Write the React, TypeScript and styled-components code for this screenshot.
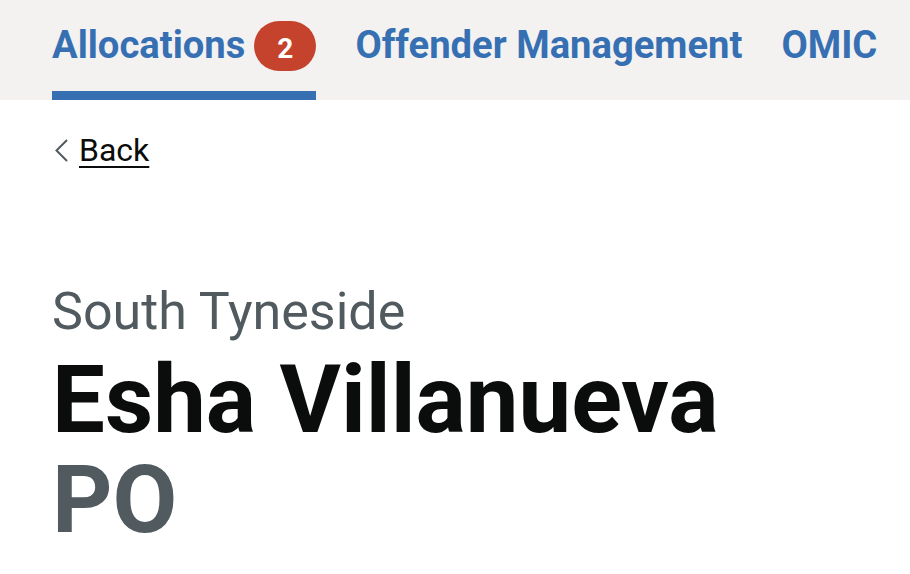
import React from "react";
import styled, { createGlobalStyle } from "styled-components";

const GlobalStyle = createGlobalStyle`
  html, body {
    margin: 0;
    padding: 0;
    background: #ffffff;
  }
  body {
    font-family: Roboto, "Liberation Sans", Arial, sans-serif;
    color: #0b0c0c;
    -webkit-font-smoothing: antialiased;
  }
`;

const ServiceNav = styled.nav`
  background: #f3f2f1;
  height: 100px;
`;

const NavList = styled.ul`
  list-style: none;
  margin: 0;
  padding: 0 0 0 52px;
  display: flex;
  gap: 39px;
  height: 100%;
`;

const NavItem = styled.li<{ $active?: boolean }>`
  box-sizing: border-box;
  height: 100%;
  padding-top: 21px;
  border-bottom: 9px solid ${(p) => (p.$active ? "#3670b3" : "transparent")};
  display: flex;
  align-items: flex-start;
  gap: 9px;
`;

const NavLink = styled.a`
  font-size: 38.2px;
  font-weight: 700;
  line-height: 48px;
  color: #3670b3;
  text-decoration: none;
  white-space: nowrap;
`;

const CountBadge = styled.span`
  box-sizing: border-box;
  width: 62px;
  height: 50px;
  border-radius: 25px;
  background: #c5432c;
  color: #ffffff;
  font-size: 28px;
  font-weight: 700;
  display: flex;
  align-items: center;
  justify-content: center;
  padding-top: 5px;
  line-height: 1;
`;

const Main = styled.main`
  padding: 30px 0 0 52px;
`;

const BackLink = styled.a`
  display: inline-flex;
  align-items: center;
  gap: 11px;
  font-size: 32px;
  line-height: 40px;
  color: #0b0c0c;
  text-decoration: none;
  padding-left: 3px;
`;

const BackText = styled.span`
  text-decoration: underline;
  text-decoration-thickness: 2px;
  text-underline-offset: 5px;
`;

const Chevron = styled.svg`
  width: 13px;
  height: 23px;
  flex: none;
`;

const Caption = styled.span`
  display: block;
  margin-top: 117px;
  font-size: 52px;
  line-height: 50px;
  font-weight: 400;
  color: #505a5f;
`;

const Heading = styled.h1`
  margin: 13px 0 0;
  font-size: 94px;
  line-height: 100px;
  font-weight: 700;
  color: #0b0c0c;
`;

const Role = styled.span`
  display: block;
  color: #505a5f;
`;

export default function App() {
  return (
    <>
      <GlobalStyle />
      <ServiceNav aria-label="Menu">
        <NavList>
          <NavItem $active>
            <NavLink href="#">Allocations</NavLink>
            <CountBadge>2</CountBadge>
          </NavItem>
          <NavItem>
            <NavLink href="#">Offender Management</NavLink>
          </NavItem>
          <NavItem>
            <NavLink href="#">OMIC</NavLink>
          </NavItem>
        </NavList>
      </ServiceNav>
      <Main>
        <BackLink href="#">
          <Chevron viewBox="0 0 13 23" aria-hidden="true">
            <polyline
              points="12,1 1.5,11.5 12,22"
              fill="none"
              stroke="#505a5f"
              strokeWidth="2"
            />
          </Chevron>
          <BackText>Back</BackText>
        </BackLink>
        <Caption>South Tyneside</Caption>
        <Heading>
          Esha Villanueva
          <Role>PO</Role>
        </Heading>
      </Main>
    </>
  );
}
